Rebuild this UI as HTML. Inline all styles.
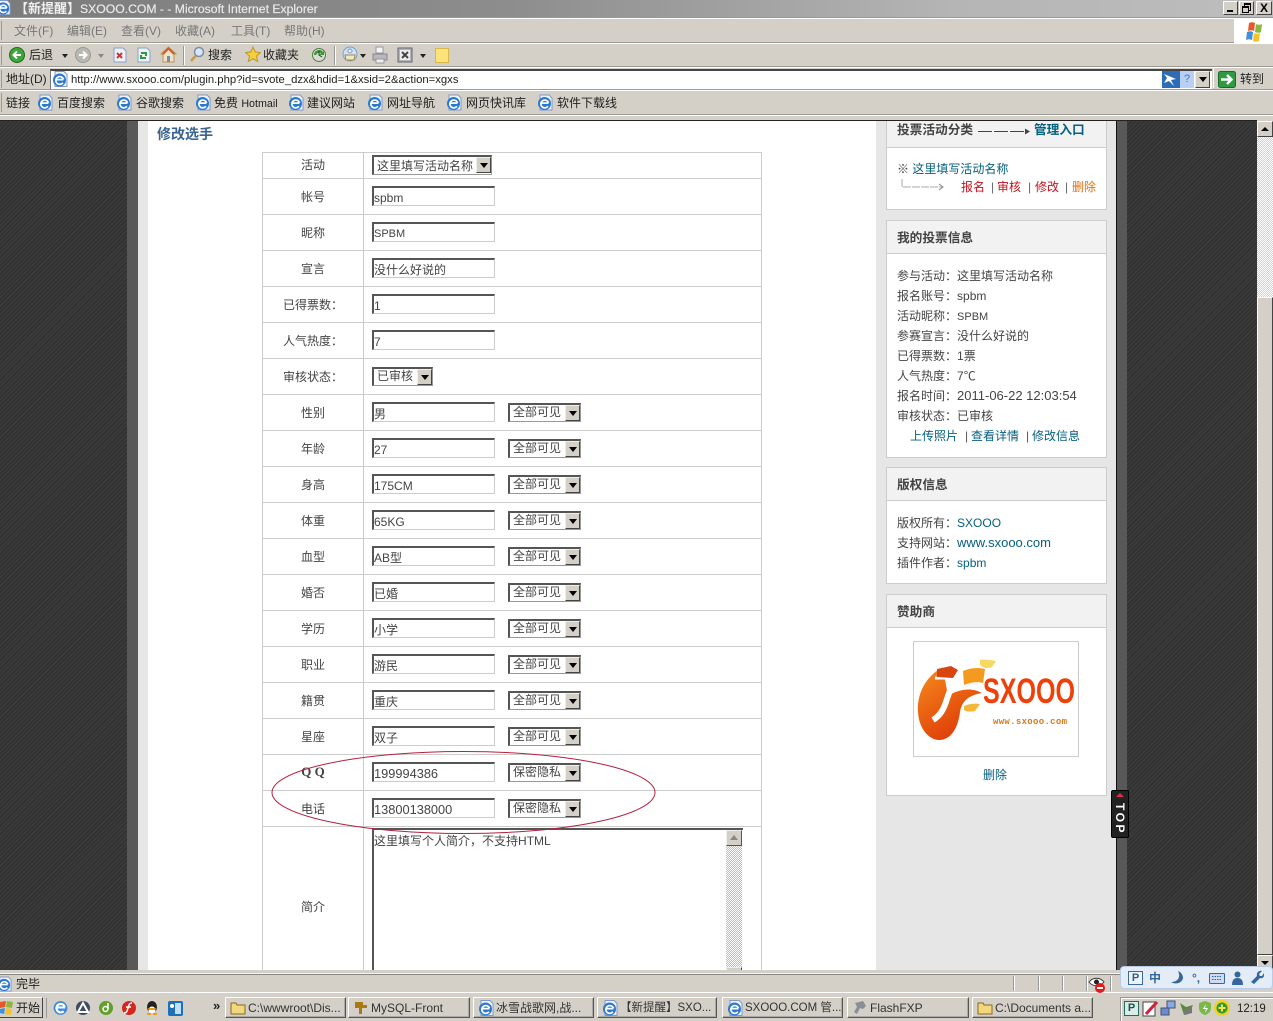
<!DOCTYPE html>
<html lang="zh"><head><meta charset="utf-8"><title>SXOOO</title>
<style>
html,body{margin:0;padding:0;width:1273px;height:1021px;overflow:hidden;background:#d4d0c8}
body{position:relative;font:12px/16px "Liberation Sans","WenQuanYi Zen Hei","Noto Sans CJK SC",sans-serif;color:#444}
div,span,svg,a,b,i,em{position:absolute;display:block;white-space:nowrap;font-style:normal}
tt{font-family:"Noto Sans CJK TC",sans-serif;font-size:12px}
u{text-decoration:none;font-size:13px}
.t{color:#333}
.tb{color:#222}
.m{color:#777;top:23px}
.k{left:0;height:1px;width:1273px}
.a{color:#036}
.r{left:263px;width:498px;height:35px;border-top:1px solid #ccc}
.r>b{font-weight:normal;left:0;width:100px;text-align:center;top:10px;color:#444}
.r>i{left:109px;top:7px;width:120px;height:17px;background:#fff;border:1px solid #ccc;border-top:2px solid #555;border-left:2px solid #555;line-height:20px;text-indent:0;overflow:hidden;box-sizing:content-box}
.s{left:245px;top:8px;width:73px;height:19px;background:#fff;border-top:2px solid #555;border-left:2px solid #555;border-right:1px solid #999;border-bottom:1px solid #999;box-sizing:border-box;overflow:visible}
.s>span{left:3px;top:-1px;line-height:17px;color:#444}
.s>em,.dd{right:0;top:0;width:15px;height:16px;background:#d4d0c8;border:1px solid;border-color:#eee #444 #444 #eee;box-sizing:border-box}
.s>em:after,.dd:after{content:"";position:absolute;left:3px;top:5px;border:4px solid transparent;border-top:5px solid #000;border-bottom:0}
.bx{left:886px;width:221px;background:#fff;border:1px solid #ccc;box-sizing:border-box}
.hd{left:0;top:0;width:219px;height:32px;background:#f2f2f2;border-bottom:1px solid #ccc}
.hd b{left:10px;top:9px;color:#444;font-weight:bold;font-size:12.7px}
.l{left:9px;color:#444}
.b{top:997px;height:21px;width:120px;background:#d4d0c8;border:1px solid;border-color:#fff #555 #555 #fff;box-sizing:border-box;line-height:21px;color:#333;box-shadow:inset -1px -1px 0 #aaa;overflow:hidden}
.b span{left:22px;top:0}
.b svg{left:4px;top:2px}
.sp{top:976px;height:15px;width:1px;background:#999;box-shadow:1px 0 0 #fff}
.tx{color:#333}
</style></head>
<body>
<svg width="0" height="0" style="left:0;top:0"><defs>
<symbol id="ie" viewBox="0 0 16 16"><path d="M3 .5h9l3 3v12H3z" fill="#eef2fb" stroke="#7f98c4"/><circle cx="7.500" cy="9" r="6.500" fill="#2a78d2"/><path d="M3.800 8.600h7.600M10.900 11.800a3.900 3.900 0 1 1 .6-3.400" fill="none" stroke="#fff" stroke-width="1.700"/></symbol>
<symbol id="fo" viewBox="0 0 16 16"><path d="M1 3h5l1 2h8v9H1z" fill="#f2d77e" stroke="#8a6a14"/></symbol>
</defs></svg>

<!-- title bar -->
<div style="left:0;top:0;width:1273px;height:17px;background:linear-gradient(90deg,#7c7c7c,#8d8d8d 40%,#b5b5b5 75%,#bdbdbd)"></div>
<svg style="left:-4px;top:0" width="15" height="15"><use href="#ie"/></svg>
<div style="left:15px;top:0;color:#f0f0f0;line-height:17px;font-weight:bold;font-size:13px">【新提醒】<span style="position:static;display:inline;font-size:12.2px;color:#e8e8e8;-webkit-text-stroke:.2px #e8e8e8;font-weight:normal">SXOOO.COM - - Microsoft Internet Explorer</span></div>
<div style="left:1223px;top:1px;width:15px;height:14px;background:#d4d0c8;border:1px solid;border-color:#fff #444 #444 #fff;box-sizing:border-box"><span style="left:3px;bottom:2px;width:6px;height:2px;background:#000"></span></div>
<div style="left:1239px;top:1px;width:15px;height:14px;background:#d4d0c8;border:1px solid;border-color:#fff #444 #444 #fff;box-sizing:border-box"><span style="left:4px;top:1px;width:5px;height:5px;border:1px solid #000;border-top-width:2px"></span><span style="left:2px;top:4px;width:5px;height:4px;border:1px solid #000;border-top-width:2px;background:#d4d0c8"></span></div>
<div style="left:1256px;top:1px;width:16px;height:14px;background:#d4d0c8;border:1px solid;border-color:#fff #444 #444 #fff;box-sizing:border-box;font-weight:bold;line-height:12px;text-align:center;color:#000;font-size:12px">X</div>

<!-- toolbars -->
<div class="k" style="top:17px;background:#999"></div><div class="k" style="top:18px;background:#fff"></div>
<div class="k" style="top:42px;background:#9c9a94"></div><div class="k" style="top:43px;background:#fff"></div>
<div class="k" style="top:66px;background:#9c9a94"></div><div class="k" style="top:67px;background:#fff"></div>
<div class="k" style="top:89px;background:#9c9a94"></div><div class="k" style="top:90px;background:#fff"></div>
<div class="k" style="top:114px;background:#9c9a94"></div><div class="k" style="top:115px;background:#fff"></div>
<div style="left:1px;top:21px;width:1px;height:19px;background:#999"></div>
<div style="left:1px;top:46px;width:1px;height:19px;background:#999"></div>
<div style="left:1px;top:70px;width:1px;height:18px;background:#999"></div>
<div style="left:1px;top:93px;width:1px;height:19px;background:#999"></div>

<span class="m" style="left:14px">文件(F)</span><span class="m" style="left:67px">编辑(E)</span><span class="m" style="left:121px">查看(V)</span><span class="m" style="left:175px">收藏(A)</span><span class="m" style="left:231px">工具(T)</span><span class="m" style="left:284px">帮助(H)</span>

<div style="left:1234px;top:19px;width:39px;height:24px;background:#fff"></div>
<svg style="left:1244px;top:21px" width="20" height="22" viewBox="0 0 20 22"><path d="M5 2c2-1 4-1 6 0l-1 8c-2-1-4-1-6 0z" fill="#e8562a"/><path d="M12 3c2 1 4 1 6 0l-1 8c-2 1-4 1-6 0z" fill="#8cb63c"/><path d="M3 11c2-1 4-1 6 0l-1 8c-2-1-4-1-6 0z" fill="#3f8ee0"/><path d="M10 12c2 1 4 1 6 0l-1 8c-2 1-4 1-6 0z" fill="#f5c22e"/></svg>

<!-- toolbar icons -->
<svg style="left:9px;top:47px" width="16" height="16"><circle cx="8" cy="8" r="7.500" fill="#3fa53a" stroke="#1e6d1e"/><path d="M12 8H5M8 4.500l-3.500 3.500 3.500 3.500" fill="none" stroke="#fff" stroke-width="2"/></svg>
<span class="tb" style="left:29px;top:47px">后退</span>
<div style="left:62px;top:54px;border:3px solid transparent;border-top:4px solid #222;border-bottom:0"></div>
<svg style="left:75px;top:47px" width="16" height="16"><circle cx="8" cy="8" r="7.500" fill="#b9b9b2" stroke="#999"/><path d="M4 8h7M8 4.500l3.500 3.500-3.500 3.500" fill="none" stroke="#fff" stroke-width="2"/></svg>
<div style="left:98px;top:54px;border:3px solid transparent;border-top:4px solid #888;border-bottom:0"></div>
<svg style="left:113px;top:47px" width="14" height="16"><path d="M1 1h9l3 3v11H1z" fill="#eef2fb" stroke="#8aa0c8"/><path d="M4 6l5 5M9 6l-5 5" stroke="#d8322a" stroke-width="2"/></svg>
<svg style="left:137px;top:47px" width="14" height="16"><path d="M1 1h9l3 3v11H1z" fill="#eef2fb" stroke="#8aa0c8"/><path d="M4 6h5v3M9 11H4V8" fill="none" stroke="#2f9a3a" stroke-width="2"/></svg>
<svg style="left:160px;top:46px" width="17" height="17"><path d="M8.500 1L1 8h2v8h11V8h2z" fill="#f0e2c4" stroke="#b8925a"/><path d="M3 8l5.500-5.500L14 8" fill="none" stroke="#d85a2a" stroke-width="2"/><rect x="7" y="10" width="3" height="6" fill="#7a8aa8"/></svg>
<div style="left:183px;top:46px;width:1px;height:19px;background:#999;box-shadow:1px 0 0 #fff"></div>
<svg style="left:189px;top:46px" width="16" height="17"><circle cx="10" cy="6" r="4.500" fill="#d6e8f8" stroke="#7a8ca8" stroke-width="1.500"/><path d="M7 9.500L2 15" stroke="#c89a4a" stroke-width="2.500"/></svg>
<span class="tb" style="left:208px;top:47px">搜索</span>
<svg style="left:245px;top:46px" width="16" height="17"><path d="M8 1l2.200 5 5.300.5-4 3.500 1.200 5.500L8 12.700 3.300 15.500 4.500 10l-4-3.500L5.800 6z" fill="#f6cf3c" stroke="#c0962a"/></svg>
<span class="tb" style="left:263px;top:47px">收藏夹</span>
<svg style="left:311px;top:47px" width="16" height="16"><circle cx="8" cy="8" r="6.500" fill="#d8dcd0" stroke="#5a7a4a"/><path d="M3 8a5 5 0 0 1 9-3l1-2v5H8l2-1.500A3.200 3.200 0 0 0 5 8z" fill="#3c9a3c"/><path d="M8 4v4l3 2" stroke="#333" fill="none"/></svg>
<div style="left:334px;top:46px;width:1px;height:19px;background:#999;box-shadow:1px 0 0 #fff"></div>
<svg style="left:342px;top:46px" width="17" height="17"><circle cx="8" cy="8" r="7" fill="#cfe2f6" stroke="#7a9cc8"/><path d="M3 9h10l-1 5H4z" fill="#f3e8c0" stroke="#a08a4a"/><circle cx="8" cy="5" r="2" fill="#e8f0fb" stroke="#7a9cc8"/></svg>
<div style="left:360px;top:54px;border:3px solid transparent;border-top:4px solid #222;border-bottom:0"></div>
<svg style="left:372px;top:46px" width="16" height="18"><path d="M4 1h7v6H4z" fill="#f4f4f4" stroke="#999"/><path d="M1 8h14v6H1z" fill="#b8b8c0" stroke="#888"/><path d="M4 13h8v4H4z" fill="#eee" stroke="#999"/></svg>
<svg style="left:397px;top:47px" width="16" height="16"><rect x="1" y="1" width="14" height="14" fill="#b4b4bc" stroke="#666"/><rect x="3" y="3" width="10" height="10" fill="#ececec"/><path d="M5 5l6 6M11 5l-6 6" stroke="#444" stroke-width="2"/></svg>
<div style="left:420px;top:54px;border:3px solid transparent;border-top:4px solid #222;border-bottom:0"></div>
<div style="left:435px;top:48px;width:14px;height:15px;background:#fbe27a;border:1px solid #d8b84a;box-sizing:border-box"></div>

<!-- address -->
<span class="tb" style="left:6px;top:71px">地址(D)</span>
<div style="left:50px;top:69px;width:1162px;height:20px;background:#fff;border-top:2px solid #444;border-left:1px solid #777;box-sizing:border-box"></div>
<svg style="left:52px;top:71px" width="16" height="16"><use href="#ie"/></svg>
<span style="left:71px;top:72px;color:#222;font-size:11.3px">http://www.sxooo.com/plugin.php?id=svote_dzx&amp;hdid=1&amp;xsid=2&amp;action=xgxs</span>
<div style="left:1162px;top:71px;width:18px;height:17px;background:#2c6cb8"></div>
<svg style="left:1162px;top:71px" width="18" height="17"><path d="M2 3l12 5-5 1 3 6-5-5-5 2 3-5z" fill="#fff"/></svg>
<div style="left:1180px;top:71px;width:14px;height:17px;background:#b8d0f4;color:#4a74b8;font-size:11px;line-height:17px;text-align:center">?</div>
<div class="dd" style="left:1195px;top:71px;right:auto;width:15px;height:17px"></div>
<div style="left:1213px;top:68px;width:1px;height:20px;background:#fff"></div>
<svg style="left:1218px;top:71px" width="18" height="17"><rect x=".5" y=".5" width="17" height="16" rx="2" fill="#2f9a3f" stroke="#1c6a28"/><path d="M3 8.500h10M9 4l4.500 4.500L9 13" fill="none" stroke="#fff" stroke-width="2.500"/></svg>
<span class="tb" style="left:1240px;top:71px">转到</span>

<!-- links -->
<span class="tb" style="left:6px;top:95px">链接</span>
<svg style="left:37px;top:94px" width="16" height="17"><use href="#ie"/></svg><span class="tb" style="left:57px;top:95px">百度搜索</span>
<svg style="left:116px;top:94px" width="16" height="17"><use href="#ie"/></svg><span class="tb" style="left:136px;top:95px">谷歌搜索</span>
<svg style="left:195px;top:94px" width="16" height="17"><use href="#ie"/></svg><span class="tb" style="left:214px;top:95px">免费 <span style="position:static;display:inline;font-size:10.7px">Hotmail</span></span>
<svg style="left:288px;top:94px" width="16" height="17"><use href="#ie"/></svg><span class="tb" style="left:307px;top:95px">建议网站</span>
<svg style="left:367px;top:94px" width="16" height="17"><use href="#ie"/></svg><span class="tb" style="left:387px;top:95px">网址导航</span>
<svg style="left:446px;top:94px" width="16" height="17"><use href="#ie"/></svg><span class="tb" style="left:466px;top:95px">网页快讯库</span>
<svg style="left:537px;top:94px" width="16" height="17"><use href="#ie"/></svg><span class="tb" style="left:557px;top:95px">软件下载线</span>

<!-- page -->
<div style="left:0;top:120px;width:1257px;height:855px;overflow:hidden;background:#333;border-top:1px solid #222;box-sizing:border-box">
 <div style="left:0;top:0;width:127px;height:854px;background:repeating-linear-gradient(135deg,#2e2e2e 0 1px,#3a3a3a 1px 3px)"></div>
 <div style="left:1127px;top:0;width:130px;height:854px;background:repeating-linear-gradient(135deg,#2e2e2e 0 1px,#3a3a3a 1px 3px)"></div>
 <div style="left:127px;top:0;width:11px;height:854px;background:#585858"></div>
 <div style="left:138px;top:0;width:978px;height:854px;background:#e6e6e6"></div>
 <div style="left:148px;top:0;width:728px;height:854px;background:#fff"></div>
 <div style="left:1116px;top:0;width:1px;height:854px;background:#111"></div>
 <div style="left:1117px;top:0;width:10px;height:854px;background:#585858"></div>
</div>

<div style="left:0;top:121px;width:1257px;height:854px;overflow:hidden">
<div style="left:0;top:-121px;width:1257px;height:975px;overflow:hidden">
 <span style="left:157px;top:125px;font-size:14px;line-height:18px;font-weight:bold;color:#3a6490">修改选手</span>

 <!-- form table -->
 <div style="left:262px;top:152px;width:500px;height:823px;border:1px solid #ccc;border-bottom:0;box-sizing:border-box"></div>
 <div style="left:363px;top:152px;width:1px;height:823px;background:#ccc"></div>

 <div class="r" style="top:152px;height:25px;border-top:0"><b style="top:5px">活动</b>
  <div class="s" style="left:109px;top:3px;width:120px;height:20px"><span style="left:3px;top:1px">这里填写活动名称</span><em></em></div></div>
 <div class="r" style="top:178px"><b>帐号</b><i>spbm</i></div>
 <div class="r" style="top:214px"><b>昵称</b><i style="font-size:11px">SPBM</i></div>
 <div class="r" style="top:250px"><b>宣言</b><i>没什么好说的</i></div>
 <div class="r" style="top:286px"><b>已得票数<tt>：</tt></b><i>1</i></div>
 <div class="r" style="top:322px"><b>人气热度<tt>：</tt></b><i>7</i></div>
 <div class="r" style="top:358px"><b>审核状态<tt>：</tt></b><div class="s" style="left:109px;width:61px"><span>已审核</span><em></em></div></div>
 <div class="r" style="top:394px"><b>性别</b><i>男</i><div class="s"><span>全部可见</span><em></em></div></div>
 <div class="r" style="top:430px"><b>年龄</b><i>27</i><div class="s"><span>全部可见</span><em></em></div></div>
 <div class="r" style="top:466px"><b>身高</b><i>175CM</i><div class="s"><span>全部可见</span><em></em></div></div>
 <div class="r" style="top:502px"><b>体重</b><i>65KG</i><div class="s"><span>全部可见</span><em></em></div></div>
 <div class="r" style="top:538px"><b>血型</b><i>AB型</i><div class="s"><span>全部可见</span><em></em></div></div>
 <div class="r" style="top:574px"><b>婚否</b><i>已婚</i><div class="s"><span>全部可见</span><em></em></div></div>
 <div class="r" style="top:610px"><b>学历</b><i>小学</i><div class="s"><span>全部可见</span><em></em></div></div>
 <div class="r" style="top:646px"><b>职业</b><i>游民</i><div class="s"><span>全部可见</span><em></em></div></div>
 <div class="r" style="top:682px"><b>籍贯</b><i>重庆</i><div class="s"><span>全部可见</span><em></em></div></div>
 <div class="r" style="top:718px"><b>星座</b><i>双子</i><div class="s"><span>全部可见</span><em></em></div></div>
 <div class="r" style="top:754px"><b style="font-weight:bold;font-size:13px;top:9px;font-family:'Liberation Serif',serif">Q Q</b><i style="font-size:12.8px">199994386</i><div class="s"><span>保密隐私</span><em></em></div></div>
 <div class="r" style="top:790px"><b>电话</b><i style="font-size:12.8px">13800138000</i><div class="s"><span>保密隐私</span><em></em></div></div>
 <div class="r" style="top:826px;height:148px"><b style="top:72px">简介</b></div>

 <div style="left:372px;top:828px;width:371px;height:147px;background:#fff;border-top:2px solid #555;border-left:2px solid #555;box-sizing:border-box"><span style="left:0;top:3px;color:#444">这里填写个人简介<tt>，</tt>不支持HTML</span></div>
 <div style="left:726px;top:830px;width:16px;height:140px;background:repeating-conic-gradient(#bbb 0 25%,#fff 0 50%) 0 0/2px 2px"></div>
 <div style="left:726px;top:830px;width:16px;height:16px;background:#d4d0c8;border:1px solid;border-color:#eee #555 #555 #eee;box-sizing:border-box"><span style="left:3px;top:4px;border:4px solid transparent;border-bottom:5px solid #888;border-top:0"></span></div>
 <div style="left:726px;top:967px;width:16px;height:8px;background:#d4d0c8;border:1px solid;border-color:#eee #555 #555 #eee;box-sizing:border-box"></div>

 <svg style="left:260px;top:745px" width="410" height="95" viewBox="260 745 410 95"><ellipse cx="463.500" cy="792.500" rx="191.500" ry="41" fill="none" stroke="#b3213f" stroke-width="1"/></svg>

 <!-- sidebar -->
 <div class="bx" style="top:100px;height:110px"><div class="hd" style="height:46px"><b style="top:21px">投票活动分类</b>
   <svg style="left:91px;top:26px" width="54" height="9"><path d="M0 4.500h50" stroke="#444" stroke-dasharray="14 2"/><path d="M47 1.500l5 3-5 3z" fill="#444"/></svg>
   <b style="left:147px;top:21px;color:#06607f">管理入口</b></div>
  <span style="left:10px;top:60px;color:#444">※ <span style="position:static;display:inline;color:#06607f">这里填写活动名称</span></span>
  <svg style="left:14px;top:76px" width="44" height="14"><path d="M1 2v8h40" fill="none" stroke="#aaa" stroke-dasharray="6 0 2 1"/><path d="M38 7l4 3-4 3" fill="none" stroke="#888"/></svg>
  <span style="left:74px;top:78px;color:#c4121c">报名</span><span style="left:104px;top:78px;color:#666">|</span><span style="left:110px;top:78px;color:#c4121c">审核</span><span style="left:141px;top:78px;color:#666">|</span><span style="left:148px;top:78px;color:#c4121c">修改</span><span style="left:178px;top:78px;color:#666">|</span><span style="left:185px;top:78px;color:#e07010">删除</span>
 </div>

 <div class="bx" style="top:220px;height:238px"><div class="hd"><b>我的投票信息</b></div>
  <span class="l" style="top:47px;left:10px">参与活动<tt>：</tt>这里填写活动名称</span>
  <span class="l" style="top:67px;left:10px">报名账号<tt>：</tt>spbm</span>
  <span class="l" style="top:87px;left:10px">活动昵称<tt>：</tt><span style="position:static;display:inline;font-size:11px">SPBM</span></span>
  <span class="l" style="top:107px;left:10px">参赛宣言<tt>：</tt>没什么好说的</span>
  <span class="l" style="top:127px;left:10px">已得票数<tt>：</tt>1票</span>
  <span class="l" style="top:147px;left:10px">人气热度<tt>：</tt>7℃</span>
  <span class="l" style="top:167px;left:10px">报名时间<tt>：</tt><u>2011-06-22 12:03:54</u></span>
  <span class="l" style="top:187px;left:10px">审核状态<tt>：</tt>已审核</span>
  <span style="left:23px;top:207px;color:#06607f">上传照片</span><span style="left:78px;top:207px;color:#555">|</span><span style="left:84px;top:207px;color:#06607f">查看详情</span><span style="left:139px;top:207px;color:#555">|</span><span style="left:145px;top:207px;color:#06607f">修改信息</span>
 </div>

 <div class="bx" style="top:467px;height:117px"><div class="hd"><b>版权信息</b></div>
  <span class="l" style="top:47px;left:10px">版权所有<tt>：</tt><span style="position:static;display:inline;color:#06607f">SXOOO</span></span>
  <span class="l" style="top:67px;left:10px">支持网站<tt>：</tt><u style="color:#06607f">www.sxooo.com</u></span>
  <span class="l" style="top:87px;left:10px">插件作者<tt>：</tt><span style="position:static;display:inline;color:#06607f">spbm</span></span>
 </div>

 <div class="bx" style="top:594px;height:202px"><div class="hd"><b>赞助商</b></div>
  <span style="left:96px;top:172px;color:#06607f">删除</span>
 </div>
 <div style="left:913px;top:641px;width:166px;height:116px;border:1px solid #ccc;box-sizing:border-box;background:#fff"></div>
 <svg style="left:914px;top:642px" width="164" height="114" viewBox="914 642 164 114">
  <defs><linearGradient id="g" x1="0" y1="0" x2=".6" y2="1"><stop offset="0" stop-color="#f78a1e"/><stop offset="1" stop-color="#dd3a06"/></linearGradient></defs>
  <path d="M938 670C924 680 917 695 918 712c1 18 12 28 21 28 12 0 19-12 21-28 2-12 10-17 22-19-10-6-24-4-34 3l-4-22z" fill="url(#g)"/>
  <path d="M935 678h26" stroke="#fff" stroke-width="3"/>
  <path d="M955 684c-10 8-6 26-22 36" fill="none" stroke="#fff" stroke-width="6"/>
  <path d="M937 669l14-3 7 4-5 8-16-1z" fill="#d8460e"/>
  <path d="M963 671c7-3 14-4 22-2l-2 14c-7-2-13 0-19 2z" fill="#f49a1e"/>
  <path d="M980 660c5-1 11 0 16 1l-4 6c-4 2-9 1-12-2z" fill="#f7d860"/>
  <path d="M964 706c5-2 10-3 16-2l-5 7c-4 1-8 1-11-1z" fill="#f4b838"/>
  <text x="983" y="703" font-family="'Liberation Sans',sans-serif" font-size="35" font-weight="bold" fill="#f0400a" textLength="92" lengthAdjust="spacingAndGlyphs">SXOOO</text>
  <text x="993" y="724" font-family="'Liberation Mono',monospace" font-size="9" font-weight="bold" fill="#d97a1e" textLength="74">www.sxooo.com</text>
 </svg>
</div>
</div>

<!-- TOP button -->
<div style="left:1111px;top:790px;width:18px;height:48px;background:#222;border:1px solid #000;border-radius:2px;box-sizing:border-box"></div>
<div style="left:1116px;top:793px;border:4px solid transparent;border-bottom:4px solid #d8324a;border-top:0"></div>
<div style="left:1099px;top:811px;width:42px;height:16px;transform:rotate(90deg);color:#fff;font-weight:bold;font-size:12px;line-height:16px;text-align:center;letter-spacing:2.500px">TOP</div>

<!-- scrollbar -->
<div style="left:1257px;top:121px;width:16px;height:849px;background:repeating-conic-gradient(#d4d0c8 0 25%,#fff 0 50%) 0 0/2px 2px"></div>
<div style="left:1257px;top:121px;width:16px;height:16px;background:#d4d0c8;border:1px solid;border-color:#fff #444 #444 #fff;box-sizing:border-box"><span style="left:3px;top:5px;border:4px solid transparent;border-bottom:4px solid #000;border-top:0"></span></div>
<div style="left:1257px;top:297px;width:16px;height:658px;background:#d4d0c8;border:1px solid;border-color:#fff #444 #444 #fff;box-sizing:border-box"></div>
<div style="left:1257px;top:955px;width:16px;height:15px;background:#d4d0c8;border:1px solid;border-color:#fff #444 #444 #fff;box-sizing:border-box"><span style="left:3px;top:5px;border:4px solid transparent;border-top:4px solid #000;border-bottom:0"></span></div>

<!-- status bar -->
<div style="left:0;top:970px;width:1273px;height:31px;background:#d4d0c8"></div>
<div class="k" style="top:973px;background:#f4f4f0"></div><div class="k" style="top:974px;background:#888"></div>
<div class="k" style="top:992px;background:#fff"></div>
<svg style="left:-3px;top:976px" width="15" height="16"><use href="#ie"/></svg>
<span class="tb" style="left:16px;top:976px">完毕</span>
<div class="sp" style="left:1013px"></div><div class="sp" style="left:1038px"></div><div class="sp" style="left:1062px"></div><div class="sp" style="left:1086px"></div><div class="sp" style="left:1110px"></div>
<svg style="left:1088px;top:976px" width="20" height="18"><path d="M1 6c4-5 11-5 15 0-4 5-11 5-15 0z" fill="#fff" stroke="#333"/><circle cx="8.500" cy="6" r="2.500" fill="#222"/><circle cx="12" cy="12" r="5" fill="#e01a1a"/><rect x="9" y="11" width="6" height="2" fill="#fff"/></svg>

<!-- IME -->
<div style="left:1120px;top:966px;width:153px;height:23px;background:#e4ecf8;border:1px solid #b8cce8;border-radius:4px;box-sizing:border-box"></div>
<div style="left:1128px;top:971px;width:15px;height:14px;border:1px solid #3a6a9c;background:#eef3fa;box-sizing:border-box;color:#2f5f90;font:bold 11px/12px 'Liberation Sans',sans-serif;text-align:center">P</div>
<span style="left:1149px;top:970px;color:#34689c;font-weight:bold">中</span>
<svg style="left:1170px;top:970px" width="14" height="15"><path d="M8 1c3 6 0 11-7 11 5 3 11 1 12-4 0-3-2-6-5-7z" fill="#34689c"/></svg>
<span style="left:1192px;top:970px;color:#34689c;font-weight:bold">°,</span>
<svg style="left:1209px;top:973px" width="16" height="11"><rect x=".5" y=".5" width="15" height="10" rx="1" fill="#cfdcf0" stroke="#34689c"/><path d="M3 3.500h10M3 6.500h10" stroke="#34689c" stroke-dasharray="1.500 1"/></svg>
<svg style="left:1231px;top:971px" width="13" height="14"><circle cx="6.500" cy="3.500" r="3" fill="#34689c"/><path d="M1 14c0-5 2-7 5.500-7S12 9 12 14z" fill="#34689c"/></svg>
<svg style="left:1250px;top:970px" width="14" height="15"><path d="M12 1L9 4l1 2 2 0 2-3c1 3-1 6-4 5L4 14 1 12l6-6c-1-3 2-6 5-5z" fill="#34689c"/></svg>

<!-- taskbar -->
<div style="left:0;top:993px;width:1273px;height:28px;background:#d4d0c8"></div>
<div style="left:-4px;top:997px;width:47px;height:21px;background:#d4d0c8;border:1px solid;border-color:#fff #444 #444 #fff;box-sizing:border-box"></div>
<svg style="left:0;top:1000px" width="14" height="15"><path d="M0 2l6-1-1 6-5 1z" fill="#e8562a"/><path d="M7 1l6 1-1 6-6-1z" fill="#8cb63c"/><path d="M0 9l5-1-1 6-4-1z" fill="#3f8ee0"/><path d="M6 8l6 1-1 6-6-1z" fill="#f5c22e"/></svg>
<span class="tb" style="left:16px;top:1000px">开始</span>
<div style="left:46px;top:998px;width:1px;height:20px;background:#999"></div>
<svg style="left:52px;top:999px" width="17" height="18" viewBox="0 0 16 16"><circle cx="8" cy="8" r="6.500" fill="#3a8adf"/><path d="M3.500 7.500h9M11 11a4 4 0 1 1 1-4" fill="none" stroke="#fff" stroke-width="2"/></svg>
<svg style="left:75px;top:1000px" width="16" height="16"><circle cx="8" cy="8" r="7" fill="#3c4c64"/><path d="M8 3l5 9H3z" fill="none" stroke="#fff" stroke-width="2"/></svg>
<svg style="left:98px;top:1000px" width="16" height="16"><circle cx="8" cy="8" r="7" fill="#62a02c"/><circle cx="7.500" cy="9" r="2.500" fill="none" stroke="#fff" stroke-width="1.500"/><path d="M10 3v6" stroke="#fff" stroke-width="1.500"/></svg>
<svg style="left:121px;top:1000px" width="16" height="16"><circle cx="8" cy="8" r="7" fill="#d8261c"/><path d="M11 3C8 3 8 5 7 8s-1 5-4 5M5 7h5" fill="none" stroke="#fff" stroke-width="1.500"/></svg>
<svg style="left:144px;top:1000px" width="16" height="16"><ellipse cx="8" cy="7" rx="5" ry="6" fill="#222"/><ellipse cx="8" cy="10" rx="3.500" ry="3.500" fill="#fff"/><path d="M4 8h8l-1 2H5z" fill="#e8a01c"/><path d="M3 14h4M9 14h4" stroke="#e8a01c" stroke-width="2"/></svg>
<svg style="left:167px;top:1000px" width="17" height="17"><rect x="1" y="1" width="15" height="15" rx="2" fill="#1c70b8"/><rect x="8" y="3" width="6" height="11" fill="#bfe0f8"/><circle cx="5" cy="6" r="2" fill="#fff"/></svg>
<span style="left:213px;top:998px;color:#222;font-weight:bold;font-size:13px">»</span>

<div class="b" style="left:225px;width:121px"><svg width="16" height="16"><use href="#fo"/></svg><span>C:\wwwroot\Dis...</span></div>
<div class="b" style="left:348px;width:122px"><svg width="16" height="16" viewBox="0 0 16 16"><path d="M2 2h8v3h4v3h-5v6H6V8H2z" fill="#a87a14"/></svg><span>MySQL-Front</span></div>
<div class="b" style="left:473px;width:121px"><svg width="16" height="16"><use href="#ie"/></svg><span>冰雪战歌网,战...</span></div>
<div class="b" style="left:597px;width:120px"><svg width="16" height="16"><use href="#ie"/></svg><span style="font-size:11.5px">【新提醒】SXO...</span></div>
<div class="b" style="left:722px;width:121px"><svg width="16" height="16"><use href="#ie"/></svg><span style="font-size:11.5px">SXOOO.COM 管...</span></div>
<div class="b" style="left:847px;width:122px"><svg width="16" height="16" viewBox="0 0 16 16"><path d="M3 3l8-2 3 5-3 3-3-1-3 6-3-2 3-5z" fill="#8a8f96"/></svg><span>FlashFXP</span></div>
<div class="b" style="left:972px;width:121px"><svg width="16" height="16"><use href="#fo"/></svg><span>C:\Documents a...</span></div>

<!-- tray -->
<div style="left:1120px;top:997px;width:153px;height:24px;border-left:1px solid #999;border-top:1px solid #999;box-sizing:border-box;box-shadow:inset 1px 1px 0 #fff"></div>
<div style="left:1124px;top:1001px;width:15px;height:15px;border:1px solid #2a6a5c;background:#d8ece8;box-sizing:border-box;color:#17564a;font:bold 11px/13px 'Liberation Sans',sans-serif;text-align:center">P</div>
<svg style="left:1142px;top:1000px" width="16" height="17"><rect x="1" y="2" width="12" height="14" fill="#fff" stroke="#444"/><path d="M4 14L15 2" stroke="#d0203a" stroke-width="3"/></svg>
<svg style="left:1160px;top:1000px" width="16" height="17"><rect x="7" y="1" width="8" height="7" fill="#8aa8e8" stroke="#456"/><rect x="1" y="8" width="8" height="7" fill="#6a8ad8" stroke="#456"/></svg>
<svg style="left:1179px;top:1000px" width="16" height="17"><path d="M1 3l6 4 7-2-3 7-6 3z" fill="#5a8a3c"/><path d="M4 10l9-2v5l-7 2z" fill="#777"/></svg>
<svg style="left:1198px;top:1000px" width="14" height="16"><path d="M7 1l6 2v5c0 4-3 6-6 7-3-1-6-3-6-7V3z" fill="#7ab84a"/><path d="M8 4L5 9h3l-1 4 3-5H7z" fill="#fff"/></svg>
<svg style="left:1213px;top:999px" width="18" height="18"><circle cx="9" cy="9" r="8" fill="#f2d21c"/><circle cx="9" cy="9" r="5.500" fill="#2f9a3a"/><path d="M5.500 9h7M9 5.500v7" stroke="#f6e24a" stroke-width="2"/></svg>
<span class="tb" style="left:1237px;top:1001px;font-size:11.500px">12:19</span>
</body></html>
